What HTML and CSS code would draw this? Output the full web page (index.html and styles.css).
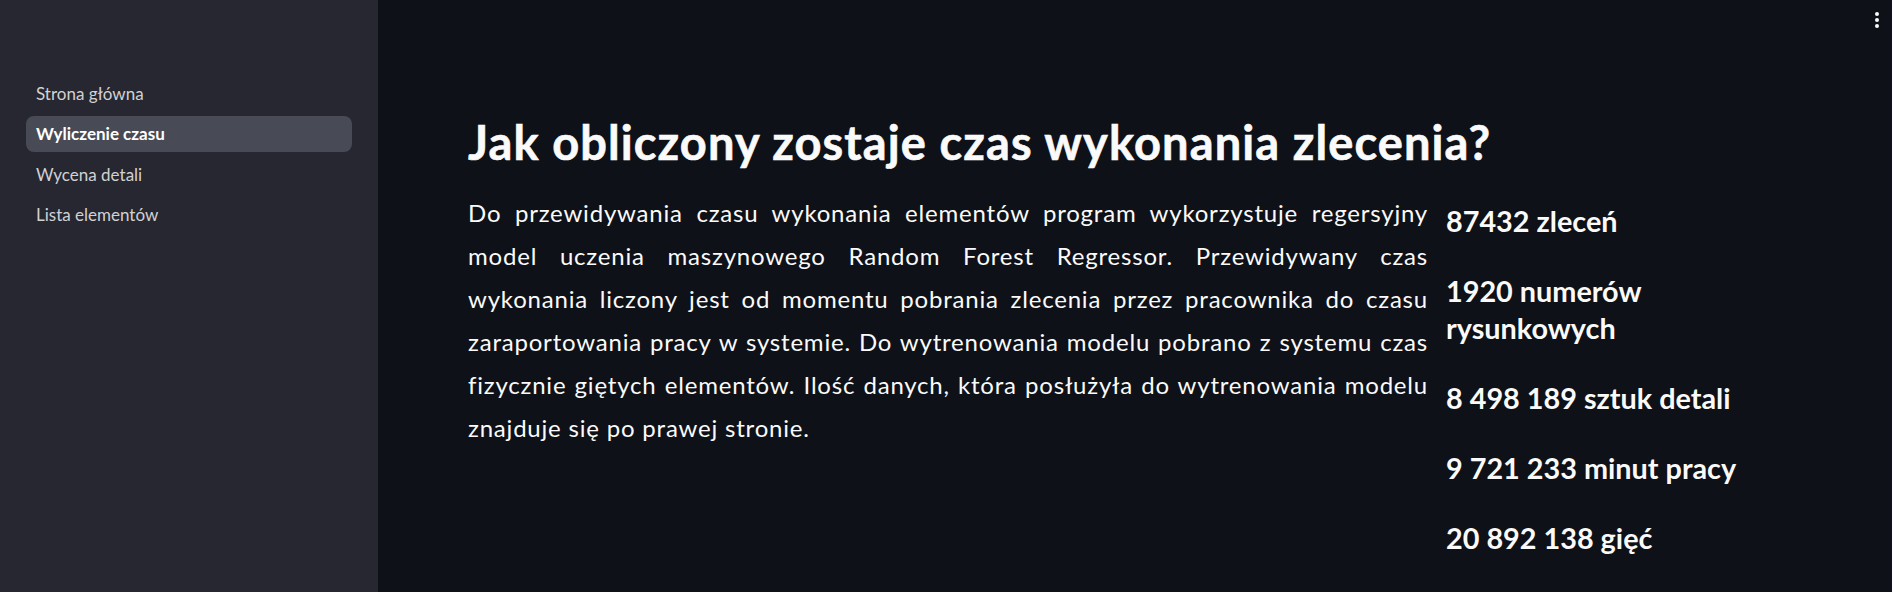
FILE: index.html
```html
<!DOCTYPE html>
<html lang="pl">
<head>
<meta charset="utf-8">
<title>Wyliczenie czasu</title>
<link rel="stylesheet" href="styles.css">
</head>
<body>
<div class="app">
  <aside class="sidebar">
    <nav class="nav">
      <a class="nav-item">Strona główna</a>
      <a class="nav-item active">Wyliczenie czasu</a>
      <a class="nav-item">Wycena detali</a>
      <a class="nav-item">Lista elementów</a>
    </nav>
  </aside>
  <main class="main">
    <div class="menu">
      <svg width="6" height="18" viewBox="0 0 6 18"><circle cx="3" cy="3" r="2" fill="#fafafa"/><circle cx="3" cy="9" r="2" fill="#fafafa"/><circle cx="3" cy="15" r="2" fill="#fafafa"/></svg>
    </div>
    <div class="content">
      <h1 class="title">Jak obliczony zostaje czas wykonania zlecenia?</h1>
      <div class="cols">
        <p class="desc">
          <span class="ln">Do przewidywania czasu wykonania elementów program wykorzystuje regersyjny</span>
          <span class="ln">model uczenia maszynowego Random Forest Regressor. Przewidywany czas</span>
          <span class="ln">wykonania liczony jest od momentu pobrania zlecenia przez pracownika do czasu</span>
          <span class="ln">zaraportowania pracy w systemie. Do wytrenowania modelu pobrano z systemu czas</span>
          <span class="ln">fizycznie giętych elementów. Ilość danych, która posłużyła do wytrenowania modelu</span>
          <span class="ln last">znajduje się po prawej stronie.</span>
        </p>
        <div class="stats">
          <p class="stat">87432 zleceń</p>
          <p class="stat">1920 numerów rysunkowych</p>
          <p class="stat">8 498 189 sztuk detali</p>
          <p class="stat">9 721 233 minut pracy</p>
          <p class="stat">20 892 138 gięć</p>
        </div>
      </div>
    </div>
  </main>
</div>
</body>
</html>
```
FILE: styles.css
```css
* { box-sizing: border-box; }
html, body { margin: 0; padding: 0; }
body {
  background: #0e1117;
  color: #fafafa;
  font-family: Lato, "Liberation Sans", sans-serif;
  width: 1892px;
  height: 592px;
  overflow: hidden;
}
.app {
  display: flex;
  height: 592px;
}
.sidebar {
  width: 378px;
  flex: none;
  background: #262730;
  padding: 75px 26px 0 26px;
}
.nav {
  display: flex;
  flex-direction: column;
  gap: 4.6px;
}
.nav-item {
  display: flex;
  align-items: center;
  height: 36px;
  padding-left: 10px;
  border-radius: 8px;
  font-size: 17px;
  color: rgba(250, 250, 250, 0.82);
}
.nav-item.active {
  background: #484a56;
  color: #ffffff;
  font-weight: 700;
}
.main {
  flex: 1;
  position: relative;
  padding: 0 0 0 90px;
}
.menu {
  position: absolute;
  top: 11px;
  right: 12px;
  width: 6px;
  height: 18px;
}
.menu svg { display: block; }
.content {
  padding-top: 114px;
}
.title {
  margin: 0;
  font-size: 47px;
  line-height: 56px;
  letter-spacing: 1.1px;
  font-weight: 700;
  color: #fafafa;
  -webkit-text-stroke: 0.6px #fafafa;
}
.cols {
  display: flex;
  gap: 18px;
  margin-top: 21px;
}
.desc {
  width: 960px;
  flex: none;
  margin: 0;
  font-size: 24px;
  line-height: 43px;
  letter-spacing: 0.8px;
}
.ln {
  display: block;
  text-align: justify;
  text-align-last: justify;
}
.ln.last { text-align-last: left; }
.stats {
  width: 305px;
  padding-top: 12px;
}
.stat {
  margin: 0 0 33px 0;
  font-size: 28.8px;
  line-height: 37px;
  font-weight: 700;
}
```
